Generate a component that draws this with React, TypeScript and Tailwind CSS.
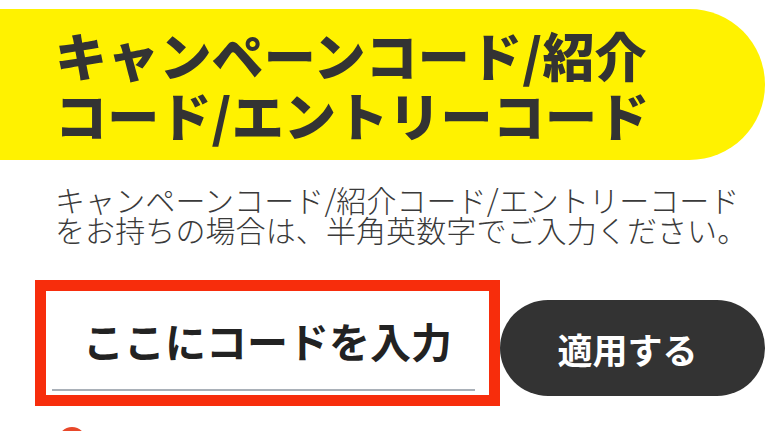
import React from "react";

export default function App() {
  const font = { fontFamily: '"Noto Sans CJK JP", "Noto Sans", sans-serif' };
  return (
    <div className="w-[780px] h-[431px] overflow-hidden bg-white" style={font}>
      <div className="pt-[9px]">
        <div className="w-[765px] h-[151px] bg-[#fff200] rounded-r-full flex items-center pl-[55px]">
          <h1 className="text-[52px] leading-[60px] font-black text-[#333333] tracking-[0.2px]">
            キャンペーンコード/紹介
            <br />
            コード/エントリーコード
          </h1>
        </div>
      </div>
      <p className="mt-[24px] pl-[55px] text-[30px] leading-[30px] font-light text-[#3a3a3a] tracking-[0.1px]">
        キャンペーンコード/紹介コード/エントリーコード
        <br />
        をお持ちの場合は、半角英数字でご入力ください。
      </p>
      <div className="mt-[36px] flex items-start pl-[35px]">
        <div className="w-[465px] h-[126px] border-[11px] border-[#f72d0c] bg-white flex flex-col">
          <div className="flex-1 flex items-center pl-[37px]">
            <span className="text-[41px] leading-[41px] font-bold text-[#222222]">ここにコードを入力</span>
          </div>
          <div className="h-[2px] ml-[6px] mr-[14px] mb-[4px] bg-[#a9b0b8]" />
        </div>
        <button className="mt-[20px] w-[265px] h-[96px] rounded-full bg-[#333333] flex items-center justify-center pr-[10px]">
          <span className="text-[35px] leading-[35px] font-bold text-white">適用する</span>
        </button>
      </div>
      <div className="mt-[21px] ml-[58px] w-[28px] h-[28px] rounded-full bg-[#e8482a]" />
    </div>
  );
}
